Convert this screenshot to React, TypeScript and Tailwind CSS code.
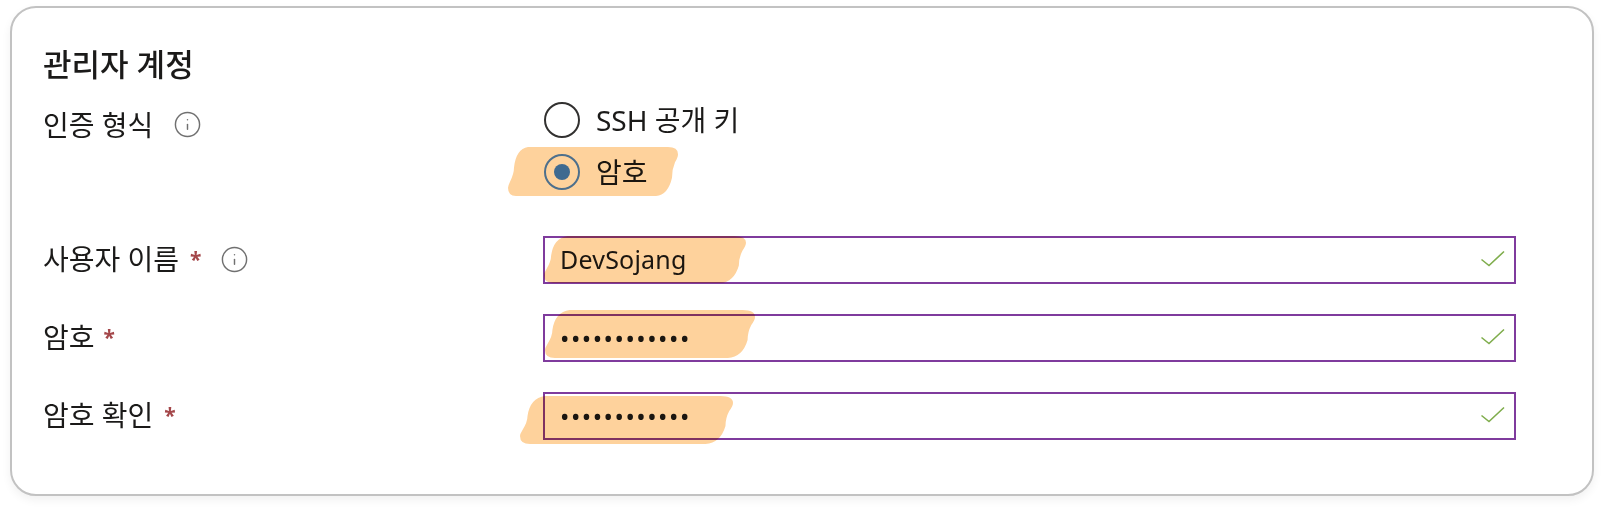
import { Info } from "lucide-react";

// hand drawn marker stroke, sits over the fields
function Marker({ className }: { className: string }) {
    return (
        <svg
            className={`absolute pointer-events-none mix-blend-multiply ${className}`}
            viewBox="0 0 170 48"
            preserveAspectRatio="none"
        >
            <path
                d="M20 0 L160 0 Q170 0 170 7 Q170 10 167 15 Q164 22 164 30 Q160 47 148 48 L8 48 Q0 48 0 40 Q0 38 2 34 Q6 26 6 20 Q8 2 20 0 Z"
                fill="#fed29c"
            />
        </svg>
    );
}

function InfoIcon() {
    return <Info className="w-[29px] h-[29px] text-[#707070]" strokeWidth={1.2} />;
}

function Required() {
    return <span className="relative -top-[3px] text-[#a4474a] font-bold text-[21px] leading-none">*</span>;
}

function Check() {
    return (
        <svg className="absolute right-[10px] top-[14px] w-[26px] h-[18px]" viewBox="0 0 26 18" fill="none">
            <path d="M1.5 9.5 L9 15.5 L24 1.5" stroke="#7fad4c" strokeWidth="1.6" />
        </svg>
    );
}

interface FieldProps {
    value: string;
    type?: string;
    marker: string;
}

function Field({ value, type = "text", marker }: FieldProps) {
    return (
        <div className="relative h-[48px]">
            <input
                readOnly
                type={type}
                value={value}
                className={`w-full h-full border-2 border-[#7f3b9d] bg-white pl-[15px] pr-10 text-[#1b1a19] text-[25px] outline-none ${type === "password" ? "tracking-[1.5px]" : "tracking-[0.2px] pb-[3px]"}`}
            />
            <Check />
            <Marker className={marker} />
        </div>
    );
}

export default function App() {
    const font = { fontFamily: '"Noto Sans", "Noto Sans CJK KR", sans-serif' };
    return (
        <div className="w-[1604px] h-[510px] bg-white pt-[6px] pl-[10px]" style={font}>
            <div className="w-[1584px] h-[490px] bg-white border-2 border-[#c2c2c2] rounded-[26px] pl-[31px] pr-[76px] pt-[36px] shadow-[0_4px_10px_rgba(0,0,0,0.06)] text-[#1b1a19]">
                <h2 className="text-[31px] font-medium leading-[40px] h-[52px]">관리자 계정</h2>

                <div className="grid grid-cols-[500px_1fr] text-[28px]">
                    <div className="flex items-start gap-5 leading-[36px] pt-[11px]">
                        <span>인증 형식</span>
                        <span className="mt-[3px]"><InfoIcon /></span>
                    </div>
                    <div className="flex flex-col gap-[16px] h-[140px] pt-[6px] pl-[1px]">
                        <label className="flex items-center gap-[16px] h-[36px]">
                            <span className="w-[36px] h-[36px] rounded-full border-2 border-[#323130] bg-white" />
                            <span>SSH 공개 키</span>
                        </label>
                        <label className="relative flex items-center gap-[16px] h-[36px]">
                            <span className="relative z-10 flex items-center justify-center w-[36px] h-[36px] rounded-full border-2 border-[#4d6f8c]">
                                <span className="w-[16px] h-[16px] rounded-full bg-[#3f6a90]" />
                            </span>
                            <span>암호</span>
                            <Marker className="-left-[36px] -top-[7px] w-[170px] h-[49px]" />
                        </label>
                    </div>
                </div>

                <div className="grid grid-cols-[500px_1fr] gap-y-[30px] text-[28px] items-center">
                    <div className="flex items-center pb-[2px]">
                        <span>사용자 이름</span>
                        <span className="ml-[11px]"><Required /></span>
                        <span className="ml-[19px]"><InfoIcon /></span>
                    </div>
                    <Field value="DevSojang" marker="left-[1px] top-0 w-[202px] h-[47px]" />

                    <div className="flex items-center pb-[2px]">
                        <span>암호</span>
                        <span className="ml-[9px]"><Required /></span>
                    </div>
                    <Field value="abcdefghijkl" type="password" marker="left-[2px] -top-[4px] w-[210px] h-[48px]" />

                    <div className="flex items-center pb-[2px]">
                        <span>암호 확인</span>
                        <span className="ml-[11px]"><Required /></span>
                    </div>
                    <Field value="abcdefghijkl" type="password" marker="-left-[23px] top-[4px] w-[213px] h-[48px]" />
                </div>
            </div>
        </div>
    );
}
